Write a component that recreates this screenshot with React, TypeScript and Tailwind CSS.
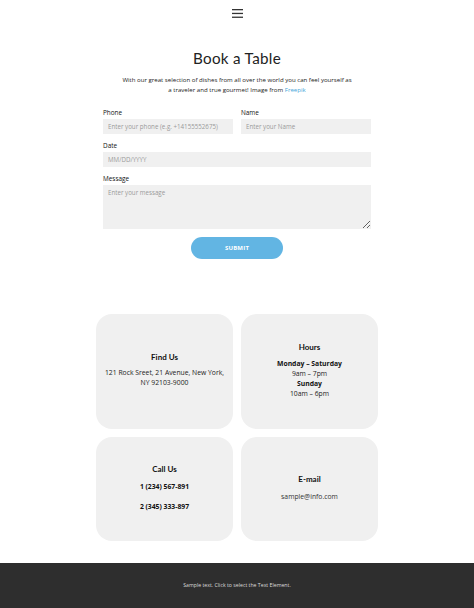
export default function App() {
  return (
    <div className="w-full bg-white text-[#111] font-['Open_Sans',sans-serif]">
      {/* header */}
      <div className="flex justify-center pt-[9px] h-[26px]">
        <svg width="11" height="9" viewBox="0 0 11 9">
          <rect x="0" y="0" width="11" height="1.3" fill="#333" />
          <rect x="0" y="3.8" width="11" height="1.3" fill="#333" />
          <rect x="0" y="7.6" width="11" height="1.3" fill="#333" />
        </svg>
      </div>

      {/* booking */}
      <div className="flex flex-col items-center pt-[22px]">
        <h1 className="font-['Lato',sans-serif] text-[15.2px] leading-[20px] text-[#222] tracking-[0.3px]">
          Book a Table
        </h1>
        <p className="mt-[7px] text-[6.1px] leading-[10px] text-center text-[#222] w-[250px]">
          With our great selection of dishes from all over the world you can feel yourself as
          <br />
          a traveler and true gourmet! Image from <span className="text-[#47a6d9]">Freepik</span>
        </p>

        <form className="w-[268px] mt-[14px] flex flex-col" onSubmit={(e) => e.preventDefault()}>
          <div className="grid grid-cols-2 gap-x-[8px]">
            <div className="flex flex-col">
              <label className="text-[6.4px] leading-[8px] mb-[2px]">Phone</label>
              <input
                className="h-[15px] bg-[#f0f0f0] px-[5px] text-[6.2px] placeholder-[#9a9a9a] outline-none"
                placeholder="Enter your phone (e.g. +14155552675)"
              />
            </div>
            <div className="flex flex-col">
              <label className="text-[6.4px] leading-[8px] mb-[2px]">Name</label>
              <input
                className="h-[15px] bg-[#f0f0f0] px-[5px] text-[6.2px] placeholder-[#9a9a9a] outline-none"
                placeholder="Enter your Name"
              />
            </div>
          </div>
          <label className="text-[6.4px] leading-[8px] mb-[2px] mt-[8px]">Date</label>
          <input
            className="h-[15px] bg-[#f0f0f0] px-[5px] text-[6.2px] placeholder-[#9a9a9a] outline-none"
            placeholder="MM/DD/YYYY"
          />
          <label className="text-[6.4px] leading-[8px] mb-[2px] mt-[8px]">Message</label>
          <textarea
            className="h-[44px] bg-[#f0f0f0] px-[5px] py-[3px] text-[6.2px] placeholder-[#9a9a9a] outline-none"
            placeholder="Enter your message"
          />
          <button
            type="submit"
            className="self-center mt-[8px] w-[92px] h-[22px] rounded-full bg-[#62b5e3] text-white text-[6px] font-bold tracking-[0.2px]"
          >
            SUBMIT
          </button>
        </form>
      </div>

      {/* info cards */}
      <div className="mt-[55px] mx-auto w-[282px] grid grid-cols-2 gap-[8px]">
        <div className="h-[115px] rounded-[16px] bg-[#f0f0f0] flex flex-col items-center justify-center text-center pb-[3px]">
          <h3 className="font-['Lato',sans-serif] font-bold text-[8px] leading-[10px]">Find Us</h3>
          <p className="mt-[6px] text-[6.8px] leading-[10px] text-[#222]">
            121 Rock Sreet, 21 Avenue, New York,
            <br />
            NY 92103-9000
          </p>
        </div>
        <div className="h-[115px] rounded-[16px] bg-[#f0f0f0] flex flex-col items-center justify-center text-center pb-[3px]">
          <h3 className="font-['Lato',sans-serif] font-bold text-[8px] leading-[10px]">Hours</h3>
          <div className="mt-[7px] text-[6.8px] leading-[10px] text-[#222]">
            <p className="font-bold text-[#111]">Monday – Saturday</p>
            <p>9am – 7pm</p>
            <p className="font-bold text-[#111]">Sunday</p>
            <p>10am – 6pm</p>
          </div>
        </div>
        <div className="h-[104px] rounded-[16px] bg-[#f0f0f0] flex flex-col items-center justify-center text-center pb-[2px]">
          <h3 className="font-['Lato',sans-serif] font-bold text-[8px] leading-[10px]">Call Us</h3>
          <p className="mt-[8px] text-[6.8px] leading-[10px] font-bold">1 (234) 567-891</p>
          <p className="mt-[10px] text-[6.8px] leading-[10px] font-bold">2 (345) 333-897</p>
        </div>
        <div className="h-[104px] rounded-[16px] bg-[#f0f0f0] flex flex-col items-center justify-center text-center pb-[2px]">
          <h3 className="font-['Lato',sans-serif] font-bold text-[8px] leading-[10px]">E-mail</h3>
          <p className="mt-[8px] text-[6.8px] leading-[10px] text-[#333]">sample@info.com</p>
        </div>
      </div>

      {/* footer */}
      <div className="mt-[22px] h-[45px] bg-[#2e2e2e] flex items-center justify-center">
        <p className="text-[5.2px] text-[#ddd]">Sample text. Click to select the Text Element.</p>
      </div>
    </div>
  );
}
